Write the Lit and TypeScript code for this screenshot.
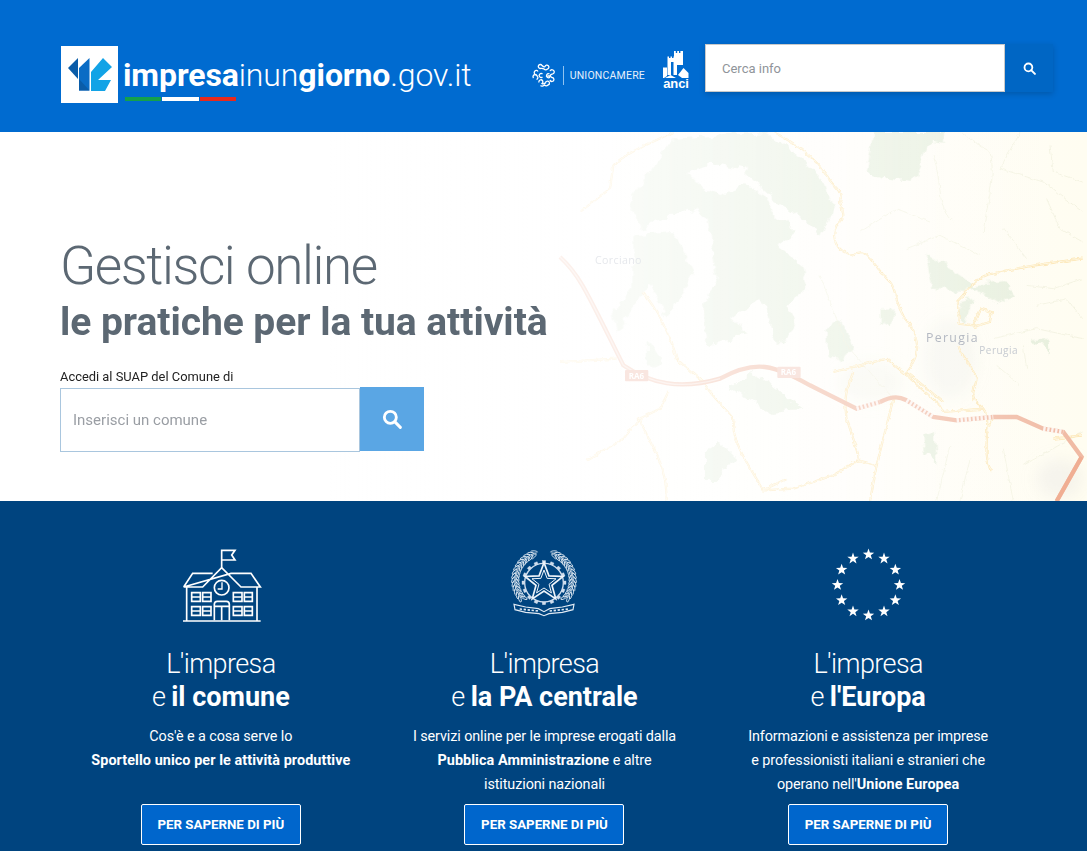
import { LitElement, html, css, svg } from "lit";
import { customElement } from "lit/decorators.js";

const searchIcon = html`<svg viewBox="0 0 24 24" class="sico"><circle cx="10" cy="10" r="7.2" fill="none" stroke="currentColor" stroke-width="3.4"/><path d="M15.5 15.5 22 22" stroke="currentColor" stroke-width="3.6" stroke-linecap="round"/></svg>`;

const star = (cx: number, cy: number, r: number, inner = 0.4) => {
  const pts: string[] = [];
  for (let i = 0; i < 10; i++) {
    const a = -Math.PI / 2 + (i * Math.PI) / 5;
    const rr = i % 2 ? r * inner : r;
    pts.push(`${(cx + rr * Math.cos(a)).toFixed(2)},${(cy + rr * Math.sin(a)).toFixed(2)}`);
  }
  return pts.join(" ");
};

const euStars = Array.from({ length: 12 }, (_, i) => {
  const a = (i * Math.PI) / 6;
  return svg`<polygon points=${star(47.5 + 31 * Math.sin(a), 44 - 30.5 * Math.cos(a), 6)} fill="#fff"/>`;
});

const leaves = (side: number) =>
  Array.from({ length: 30 }, (_, i) => {
    const deg = 222 - i * 3.9;
    const a = (deg * Math.PI) / 180;
    const r = i % 2 ? 92 : 80;
    const px = 135 + side * r * Math.cos(a);
    const py = 118 - (r - 2) * Math.sin(a);
    const rot = side * -deg + (i % 2 ? 22 : -22) * side;
    return svg`<ellipse cx=${px.toFixed(1)} cy=${py.toFixed(1)} rx="3.600" ry="10" transform="rotate(${rot} ${px.toFixed(1)} ${py.toFixed(1)})" fill="none" stroke="#e6eef6" stroke-width="2.400"/>`;
  });

const gearTeeth = Array.from({ length: 16 }, (_, i) => {
  const a = (i * 360) / 16;
  return svg`<rect x="130" y="59" width="10" height="8" fill="#cfdded" transform="rotate(${a} 135 125)"/>`;
});

const schoolIcon = html`<svg viewBox="0 0 300 270" width="100" height="90" fill="none" stroke="#fff" stroke-width="5">
  <path d="M152 80V28h40l-10 14 10 15h-40"/>
  <path d="M38 138 65 97h60M180 97h60l28 41H210L152 80 95 138H38Z"/>
  <path d="M47 138V238M258 138V238M36 240H269" />
  <circle cx="152" cy="140" r="22"/>
  <path d="M153 124V144H140" stroke-width="4"/>
  <path d="M130 238V190q0-9 9-9h27q9 0 9 9v48M130 196H175M152 196V238"/>
  <path d="M62 155h26v26H62ZM95 155h25v26H95ZM62 197h26v26H62ZM95 197h25v26H95ZM187 155h26v26h-26ZM220 155h24v26h-24ZM187 197h26v26h-26ZM220 197h24v26h-24Z"/>
  <path d="M62 168h26M95 168h25M62 210h26M95 210h25M187 168h26M220 168h24M187 210h26M220 210h24" stroke-width="4"/>
</svg>`;

const emblemIcon = html`<svg viewBox="0 0 270 270" width="90" height="90" fill="none" stroke="#dfe9f3">
  ${gearTeeth}
  <circle cx="135" cy="125" r="58" stroke="#cfdded" stroke-width="4"/>
  <polygon points=${star(135, 125, 60, 0.42)} fill="#00447f" stroke="#eef4fa" stroke-width="5"/>
  <polygon points=${star(135, 125, 38, 0.42)} stroke="#eef4fa" stroke-width="3"/>
  ${leaves(1)}
  ${leaves(-1)}
  <path d="M45 190 80 198 118 203 135 212 152 203 190 198 225 190 222 206 190 214 150 218 135 224 120 218 80 214 48 206Z" fill="#00447f" stroke-width="3.500"/>
  <path d="M62 204 118 210M152 210 208 204" stroke-width="5" stroke-dasharray="7 5"/>
</svg>`;

const euIcon = html`<svg viewBox="0 0 95 90" width="95" height="90">${euStars}</svg>`;

const yellowRoads = [
  "M640 0C700 30 760 70 800 130 820 170 850 170 840 210 850 240 860 260 830 280 810 320 830 360 880 370 920 340 930 390 990 450 1015 480 1000 520 1050 580 1080 630 1080 670 1040 720L1150 810",
  "M1190 510C1230 470 1250 430 1300 425 1380 405 1450 395 1568 380",
  "M1195 575C1200 540 1190 510 1195 505M1195 575 1240 580 1260 530 1295 540 1290 570 1240 585",
  "M1195 640C1200 670 1240 700 1250 740 1245 780 1220 790 1270 830 1300 870 1260 960 1295 1020 1280 1080 1260 1108",
  "M820 720 980 680 1040 730 1140 820 1150 840 1270 830",
  "M880 720C860 770 850 800 860 860 890 950 900 980 895 985L950 1000 930 1108",
  "M1000 800 950 1000",
  "M895 985 820 1030 700 1070 610 1075 680 1040",
  "M450 780 520 860C510 930 580 1020 610 1075",
  "M240 860C270 950 320 980 320 1108",
  "M325 780 300 830 240 860 190 920 80 985",
  "M250 480C280 520 330 600 350 680 400 730 420 730 450 780",
  "M160 100 150 170 60 240M160 100C200 60 280 30 340 0",
  "M0 690 170 680",
  "M1480 920 1568 910M1300 855 1290 880",
];
const fineRoads = [
  "M1290 60C1310 140 1280 210 1270 300M1320 110 1450 150 1568 240M1460 200 1500 290 1568 330",
  "M1120 70C1150 170 1130 230 1180 270M900 300 1010 230 1110 270",
  "M1330 290 1400 380M1260 370 1140 310 1040 350M1470 40 1480 120 1568 150",
  "M1390 640 1400 710M1430 520 1520 500 1568 560M1310 700 1380 760",
  "M780 430 860 640 1000 800M1200 0 1290 60M1380 0 1320 110",
  "M1170 940 1130 1108M1230 980 1200 1108M1330 950 1360 1108M1390 1000 1568 900",
  "M1400 460 1480 470 1568 440M1300 620 1430 590 1568 620",
];
const greens = [
  "M340 20 620 0 700 60 790 140 820 230 780 310 720 250 640 200 560 130 560 110 470 95 380 120 430 170 470 190 550 160 600 170 640 240 710 300 650 340 720 390 740 470 680 520 710 580 660 640 600 500 520 560 560 610 440 640 430 520 470 440 440 260 390 230 340 250 240 290 210 200 280 100Z",
  "M220 310 340 300 400 420 360 500 320 560 270 450 250 480 170 600 160 540 220 470Z",
  "M260 620 310 700 260 700Z",
  "M510 770 570 720 640 760 730 830 630 840 540 790Z",
  "M800 590 840 560 880 640 840 690 800 650Z",
  "M940 0 1155 0 1155 35 1110 30 1060 150 1020 145 980 140 920 120Z",
  "M1100 365 1130 380 1200 430 1240 460 1330 450 1360 490 1310 510 1240 470 1210 480 1120 470Z",
  "M1200 510 1240 500 1215 570 1195 560Z",
  "M965 530 1000 530 995 585 965 570Z",
  "M435 960 480 930 525 975 470 1050 435 1050Z",
  "M1410 625 1465 620 1470 670 1450 640 1410 635Z",
  "M1090 910 1125 900 1130 1000 1095 960Z",
];

const mapSvg = html`<svg class="map" viewBox="0 0 1087 369" preserveAspectRatio="none" aria-hidden="true">
  <defs>
    <linearGradient id="bg" x1="0" x2="1">
      <stop offset="0.4" stop-color="#fff"/><stop offset="0.75" stop-color="#fffefa"/><stop offset="1" stop-color="#fffdf1"/>
    </linearGradient>
    <linearGradient id="fade" gradientUnits="userSpaceOnUse" x1="330" y1="0" x2="1087" y2="0">
      <stop offset="0" stop-color="#fff" stop-opacity="1"/><stop offset="0.42" stop-color="#fff" stop-opacity=".72"/><stop offset="0.8" stop-color="#fff" stop-opacity=".3"/><stop offset="1" stop-color="#fff" stop-opacity="0"/>
    </linearGradient>
    <filter id="rough" x="-10%" y="-10%" width="120%" height="120%">
      <feTurbulence type="fractalNoise" baseFrequency="0.03" numOctaves="3" seed="4"/>
      <feDisplacementMap in="SourceGraphic" scale="34" xChannelSelector="R" yChannelSelector="G"/>
      <feGaussianBlur stdDeviation="1.500"/>
    </filter>
    <filter id="wig" x="-10%" y="-10%" width="120%" height="120%">
      <feTurbulence type="fractalNoise" baseFrequency="0.06" numOctaves="2" seed="9"/>
      <feDisplacementMap in="SourceGraphic" scale="12" xChannelSelector="R" yChannelSelector="G"/>
    </filter>
    <filter id="soft" x="-40%" y="-40%" width="180%" height="180%"><feGaussianBlur stdDeviation="22"/></filter>
  </defs>
  <rect width="1087" height="369" fill="url(#bg)"/>
  <g transform="translate(560 0) scale(.3333)" fill="none">
    <g filter="url(#rough)">${greens.map((d) => svg`<path d=${d} fill="#d9e6cf" opacity=".62"/>`)}</g>
    <g filter="url(#soft)">
      <ellipse cx="1170" cy="680" rx="80" ry="120" fill="#dcdddb" opacity=".22"/>
      <ellipse cx="930" cy="750" rx="100" ry="60" fill="#e2e6d8" opacity=".25"/>
      <ellipse cx="1500" cy="1040" rx="70" ry="60" fill="#dcdddb" opacity=".25"/>
    </g>
    <g filter="url(#wig)">
      ${fineRoads.map((d) => svg`<path d=${d} stroke="#efeeda" stroke-width="2"/>`)}
      ${yellowRoads.map((d) => svg`<path d=${d} stroke="#fce3ab" stroke-width="6.500"/><path d=${d} stroke="#fffdf4" stroke-width="2.200"/>`)}
    </g>
    <path d="M0 375C60 430 80 480 190 700 270 755 360 775 480 740 590 680 640 700 750 760L890 830 960 810C1000 790 1020 795 1040 805L1120 855 1190 865 1300 855H1370L1450 890 1510 900 1565 975 1490 1108" stroke="#f0b9a2" stroke-width="13"/>
    <path d="M0 375C60 430 80 480 190 700 270 755 360 775 480 740" stroke="#fff" stroke-opacity=".5" stroke-width="4"/>
    <path d="M890 830 960 810M1040 805 1120 855M1190 865 1300 855M1450 890 1510 900" stroke="#fff" stroke-width="14" stroke-dasharray="7 5" opacity=".82"/>
  </g>
  <rect width="1087" height="369" fill="url(#fade)"/>
  <g transform="translate(560 0) scale(.3333)">
    <path d="M1565 975 1490 1108" fill="none" stroke="#f0ae93" stroke-width="12"/>
    <g fill="#f9e6e0"><rect x="195" y="714" width="70" height="34" rx="3"/><rect x="652" y="704" width="70" height="34" rx="3"/></g>
    <g font-family="'Open Sans',sans-serif" font-size="24" fill="#fff" font-weight="700"><text x="206" y="741">RA6</text><text x="662" y="730">RA6</text></g>
    <g font-family="'Open Sans',sans-serif">
      <text x="105" y="395" font-size="32" letter-spacing="1" fill="#e6e8ec">Corciano</text>
      <text x="1098" y="630" font-size="37" letter-spacing="4" fill="#b4b9c2">Perugia</text>
      <text x="1258" y="666" font-size="30" letter-spacing="1.500" fill="#c6cad1">Perugia</text>
    </g>
  </g>
</svg>`;

const cols = [
  {
    icon: schoolIcon,
    t: "il comune",
    body: html`Cos'è e a cosa serve lo<br /><b>Sportello unico per le attività produttive</b>`,
  },
  {
    icon: emblemIcon,
    t: "la PA centrale",
    body: html`I servizi online per le imprese erogati dalla<br /><b>Pubblica Amministrazione</b> e altre<br />istituzioni nazionali`,
  },
  {
    icon: euIcon,
    t: "l'Europa",
    body: html`Informazioni e assistenza per imprese<br />e professionisti italiani e stranieri che<br />operano nell'<b>Unione Europea</b>`,
  },
];

@customElement("app-root")
export class AppRoot extends LitElement {
  static styles = css`
    :host { display: block; width: 1087px; height: 851px; overflow: hidden; font-family: Roboto, "Liberation Sans", sans-serif; }
    * { box-sizing: border-box; }
    header { height: 132px; background: #006bd0; display: flex; align-items: flex-start; padding: 44px 34px 0 61px; color: #fff; }
    .logo { display: flex; align-items: flex-start; margin-top: 2px; }
    .mark { width: 57px; height: 57px; background: #fff; display: block; flex: none; }
    .word { margin-left: 5px; margin-top: 10px; }
    .wordtext { font-size: 32px; line-height: 38px; font-weight: 300; letter-spacing: -0.1px; white-space: nowrap; }
    .wordtext b { font-weight: 700; }
    .flag { display: flex; gap: 1px; margin: 3px 0 0 2px; width: 111px; height: 4px; }
    .flag i { flex: 1; }
    .g { background: #14a04b; } .w { background: #fff; } .r { background: #e8291c; }
    .uc { margin-left: auto; display: flex; align-items: center; height: 48px; margin-top: 7px; }
    .uc svg { display: block; }
    .uc .bar { width: 1px; height: 19px; background: #8fc2f0; margin: 0 6px 0 7px; }
    .uc span { font-size: 10.5px; letter-spacing: 0.2px; color: #e6f1fb; font-weight: 400; }
    .anci { margin: 6px 17px 0 19px; width: 24px; display: flex; flex-direction: column; align-items: center; }
    .anci svg { display: block; }
    .anci span { font: 700 13px/11px "Liberation Sans", sans-serif; letter-spacing: -.1px; }
    .hsearch { display: flex; height: 48px; box-shadow: 0 2px 6px rgba(0, 0, 0, .18); }
    .hinput { width: 300px; background: #fff; border: 1px solid #c9c9c9; color: #8f949a; font-size: 13px; padding: 0 16px; display: flex; align-items: center; }
    .hbtn { width: 48px; background: #0066c4; display: flex; align-items: center; justify-content: center; color: #fff; }
    .hbtn .sico { width: 13px; height: 13px; }
    .hero { position: relative; height: 369px; padding: 100px 0 0 60px; background: #fff; overflow: hidden; }
    .map { position: absolute; inset: 0; width: 100%; height: 100%; display: block; }
    .herobody { position: relative; }
    h1 { margin: 0; font-size: 53px; line-height: 68px; font-weight: 300; color: #5c6873; letter-spacing: -1.4px; }
    h2 { margin: 0; font-size: 39px; line-height: 44px; font-weight: 700; color: #5c6873; letter-spacing: -0.05px; }
    label { display: block; margin-top: 24px; font-size: 12.9px; line-height: 18px; color: #222; }
    .csearch { display: flex; align-items: flex-start; margin-top: 1px; }
    .cinput { width: 300px; height: 64px; margin-top: 1px; border: 1px solid #a9c6de; background: #fff; color: #9a9ea4; font-size: 15px; padding: 0 12px 0 12px; display: flex; align-items: center; line-height: 20px; }
    .cbtn { width: 64px; height: 64px; background: #5aa6e4; color: #fff; display: flex; align-items: center; justify-content: center; }
    .cbtn .sico { width: 20px; height: 20px; }
    .cards { height: 350px; background: #00447f; color: #fff; padding: 40px 57px 0 59px; display: grid; grid-template-columns: repeat(3, 1fr); }
    .card { display: flex; flex-direction: column; align-items: center; text-align: center; }
    .ic { height: 90px; display: flex; align-items: center; justify-content: center; }
    .ic svg { display: block; }
    h3 { margin: 17px 0 0; font-size: 27px; line-height: 33px; font-weight: 300; letter-spacing: -0.6px; }
    h3 b { font-weight: 700; letter-spacing: 0; }
    p { margin: 11px 0 0; height: 72px; font-size: 14.4px; line-height: 24px; letter-spacing: -0.1px; white-space: nowrap; }
    p b { font-weight: 700; letter-spacing: 0.07px; }
    .cta { margin-top: 7px; width: 160px; height: 41px; background: #0066cc; border: 1.5px solid #fff; border-radius: 2px; font-size: 13.3px; font-weight: 700; display: flex; align-items: center; justify-content: center; letter-spacing: 0; }
  `;

  render() {
    return html`
      <header>
        <div class="logo">
          <svg class="mark" viewBox="61 46 57 57">
            <rect x="61" y="46" width="57" height="57" fill="#fff"/>
            <path d="M68 68 78 58V79Z" fill="#0a5ca8"/>
            <path d="M79 68 89.500 58V90.500H79Z" fill="#0a6cc5"/>
            <path d="M79 79 89.500 90.500H79Z" fill="#0a5ca8"/>
            <path d="M91 72 103 58 112 67 98 80H111L105 91H91Z" fill="#12a3e6"/>
          </svg>
          <div class="word">
            <div class="wordtext"><b>impresa</b>inun<b>giorno</b>.gov.it</div>
            <div class="flag"><i class="g"></i><i class="w"></i><i class="r"></i></div>
          </div>
        </div>
        <div class="uc">
          <svg width="24" height="25" viewBox="0 0 24 25" fill="none" stroke="#fff" stroke-width="1.3">
            <path d="M8 5.500a2 2 0 1 1 2-3c1 1 2 2 3 1a2 2 0 1 1 2.500 2.500c-1 1-2.500 1-3.500 0-1-.8-2.500-.5-4-.5Z"/>
            <path d="M3 11a2 2 0 1 1 3-2.500M1.500 15a2.200 2.200 0 0 1 1.500-3.500c1 0 2 1 2.500 2a2 2 0 0 1-1 3"/>
            <path d="M18 8a2.200 2.200 0 1 1 4 2c-.5 1-2 1-3 1.500-1 1-.8 2.500 1 3a2 2 0 1 1-2 2.500"/>
            <path d="M7 19.500a2 2 0 1 1 3 1c1 1 2.500 0 3.500-.5a2 2 0 1 1 2.500 2c-1 1-2.500 1-3.500 0-1 1-3 1.500-4 .5"/>
            <path d="M10.500 11a2 2 0 1 0 0 3M15.500 13h3M17.500 11a2 2 0 1 0 .5 3"/>
          </svg>
          <i class="bar"></i>
          <span>UNIONCAMERE</span>
        </div>
        <div class="anci">
          <svg width="26" height="28" viewBox="0 0 26 28" fill="#fff">
            <path d="M11 1h1.800v2h1.400V1H16v2h1.400V1H20V15H11Z"/>
            <path d="M4.500 6.500H6V8h1.500V6.500H9V8h1.500V6.500H14V25H4.500ZM8 12v13h2.500V12Z" fill-rule="evenodd"/>
            <path d="M0 17.500H4V26L1 28H0Z"/>
            <path d="M15 25 20.500 18 25.500 23V28H19Z"/>
            <path d="M2 28 7.500 25 13 28Z"/>
          </svg>
          <span>anci</span>
        </div>
        <div class="hsearch">
          <div class="hinput">Cerca info</div>
          <div class="hbtn">${searchIcon}</div>
        </div>
      </header>
      <section class="hero">
        ${mapSvg}
        <div class="herobody">
          <h1>Gestisci online</h1>
          <h2>le pratiche per la tua attività</h2>
          <label>Accedi al SUAP del Comune di</label>
          <div class="csearch">
            <div class="cinput">Inserisci un comune</div>
            <div class="cbtn">${searchIcon}</div>
          </div>
        </div>
      </section>
      <section class="cards">
        ${cols.map(
          (c) => html`<div class="card">
            <div class="ic">${c.icon}</div>
            <h3>L'impresa<br />e <b>${c.t}</b></h3>
            <p>${c.body}</p>
            <div class="cta">PER SAPERNE DI PIÙ</div>
          </div>`
        )}
      </section>
    `;
  }
}
